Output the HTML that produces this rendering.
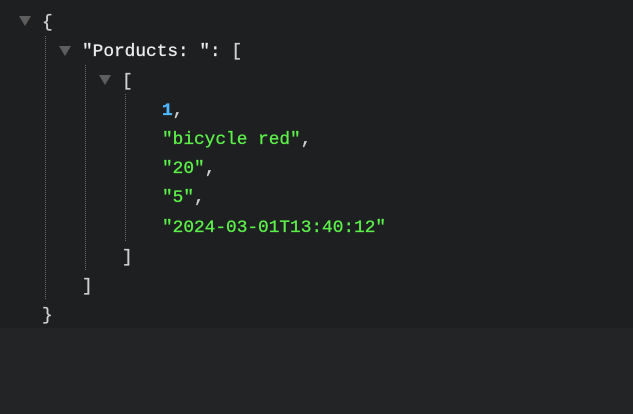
<!DOCTYPE html>
<html><head><style>
html,body{margin:0;padding:0;width:633px;height:414px;background:#232426;overflow:hidden}
#p{position:absolute;left:0;top:0;width:633px;height:328px;background:#1e1f21}
.l{position:absolute;font-family:"Liberation Mono",monospace;font-size:17.8px;line-height:20px;white-space:pre;color:#d0d0d0;-webkit-text-stroke:0.3px currentColor}
.k{color:#ececec}.n{color:#4db8ff;font-weight:bold}.s{color:#5cf04a}
.t{position:absolute;width:0;height:0;border-left:6px solid transparent;border-right:6px solid transparent;border-top:10px solid #5e5e5e}
.d{position:absolute;width:0;border-left:1px dotted #6a6a6a}
</style></head><body><div id="p"></div>
<div class="t" style="left:19px;top:16px"></div>
<div class="t" style="left:59px;top:46px"></div>
<div class="t" style="left:99px;top:75px"></div>
<div class="d" style="left:45px;top:36px;height:263px"></div>
<div class="d" style="left:85px;top:65px;height:205px"></div>
<div class="d" style="left:125px;top:94px;height:147px"></div>
<div class="l" style="left:42px;top:13px">{</div>
<div class="l k" style="left:82px;top:42px">"Porducts: ": <span style="color:#d0d0d0">[</span></div>
<div class="l" style="left:122px;top:72px">[</div>
<div class="l" style="left:162px;top:101px"><span class="n">1</span>,</div>
<div class="l" style="left:162px;top:130px"><span class="s">"bicycle red"</span>,</div>
<div class="l" style="left:162px;top:159px"><span class="s">"20"</span>,</div>
<div class="l" style="left:162px;top:188px"><span class="s">"5"</span>,</div>
<div class="l" style="left:162px;top:218px"><span class="s">"2024-03-01T13:40:12"</span></div>
<div class="l" style="left:122px;top:248px">]</div>
<div class="l" style="left:82px;top:277px">]</div>
<div class="l" style="left:42px;top:306px">}</div>
</body></html>
